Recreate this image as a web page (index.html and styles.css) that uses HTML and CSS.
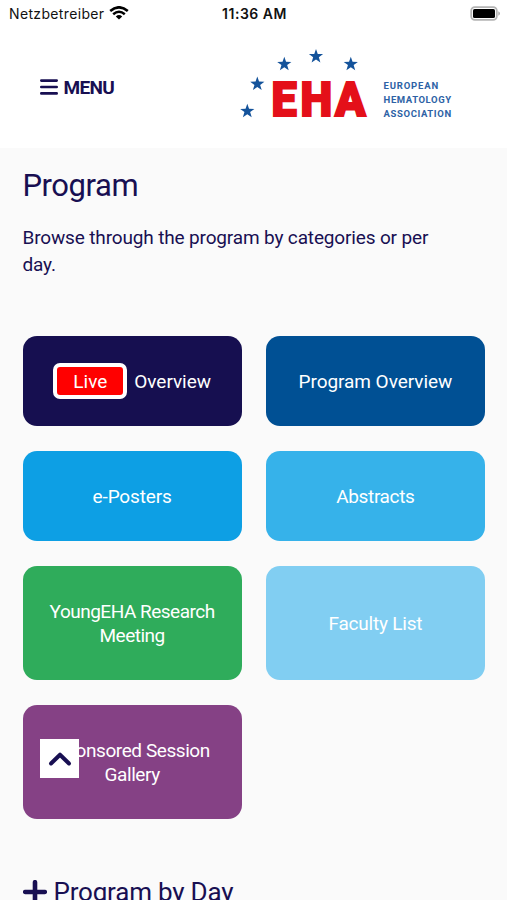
FILE: index.html
```html
<!DOCTYPE html>
<html lang="en">
<head>
<meta charset="utf-8">
<meta name="viewport" content="width=device-width, initial-scale=1">
<title>EHA Program</title>
<link rel="stylesheet" href="styles.css">
</head>
<body>
<div class="status-bar">
  <div class="carrier">
    <span class="carrier-name">Netzbetreiber</span>
    <svg class="wifi" width="20" height="14" viewBox="0 0 20 14">
      <path d="M1.2 5.1Q10 -2.5 18.8 5.1" fill="none" stroke="#000" stroke-width="2.6"/>
      <path d="M4.2 8.2Q10 3.2 15.8 8.2" fill="none" stroke="#000" stroke-width="2.5"/>
      <path d="M6.8 10.4Q10 7.8 13.2 10.4L10 13.6Z" fill="#000"/>
    </svg>
  </div>
  <span class="clock">11:36 AM</span>
  <svg class="battery" width="30" height="15" viewBox="0 0 30 15">
    <rect x="1.2" y="1.2" width="25.6" height="12.6" rx="3.6" fill="#fff" stroke="#b4b4b4" stroke-width="1.8"/>
    <rect x="3" y="3" width="22" height="9" rx="1.6" fill="#000"/>
    <path d="M28.3 5.3Q30 6 30 7.5T28.3 9.7Z" fill="#aaa"/>
  </svg>
</div>
<header class="header">
  <a class="menu">
    <svg width="18" height="16" viewBox="0 0 18 16">
      <path d="M1.3 1.6H16.7M1.3 8H16.7M1.3 14.4H16.7" stroke="#180f52" stroke-width="2.6" stroke-linecap="round"/>
    </svg>
    <span>MENU</span>
  </a>
  <svg class="logo" width="216" height="80" viewBox="239 47 216 80">
    <defs>
      <path id="star" d="M0 -7.4L1.75 -2.4L7.1 -2.3L2.85 .9L4.4 6L0 3L-4.4 6L-2.85 .9L-7.1 -2.3L-1.75 -2.4Z"/>
    </defs>
    <g fill="#14539b">
      <use href="#star" x="316" y="56.4"/>
      <use href="#star" x="284.3" y="64.2"/>
      <use href="#star" x="350.8" y="64.2"/>
      <use href="#star" x="257.3" y="84"/>
      <use href="#star" x="247.3" y="111.2"/>
    </g>
    <text class="logo-mark" transform="translate(0 116.1) scale(.93 1)" x="292 323.2 360.3">EHA</text>
    <g class="logo-name">
      <text x="383.6" y="88.5" textLength="54.5">EUROPEAN</text>
      <text x="383.6" y="102.8" textLength="67.5">HEMATOLOGY</text>
      <text x="383.6" y="117.1" textLength="67.5">ASSOCIATION</text>
    </g>
  </svg>
</header>
<main class="content">
  <h1 class="title">Program</h1>
  <p class="intro">Browse through the program by categories or per day.</p>
  <nav class="tiles">
    <a class="tile live-tile"><span class="live">Live</span><span class="live-label">Overview</span></a>
    <a class="tile overview">Program Overview</a>
    <a class="tile posters">e-Posters</a>
    <a class="tile abstracts">Abstracts</a>
    <a class="tile young">YoungEHA Research Meeting</a>
    <a class="tile faculty">Faculty List</a>
    <a class="tile sponsored">Sponsored Session Gallery</a>
  </nav>
  <h2 class="by-day">
    <svg width="24" height="24" viewBox="0 0 24 24"><path d="M12 2.2V21.8M2.2 12H21.8" stroke="#180f52" stroke-width="4.6" stroke-linecap="round"/></svg>
    <span>Program by Day</span>
  </h2>
</main>
<a class="to-top" aria-label="Back to top">
  <svg width="24" height="16" viewBox="0 0 24 16"><path d="M3 12.5L12 3.7L21 12.5" fill="none" stroke="#180f52" stroke-width="4" stroke-linecap="round" stroke-linejoin="round"/></svg>
</a>
</body>
</html>
```
FILE: styles.css
```css
* { box-sizing: border-box; }
html, body { height: 900px; overflow: hidden; }
body {
  margin: 0;
  background: #fafafa;
  color: #180f52;
  font-family: Roboto, sans-serif;
}
.status-bar {
  display: grid;
  grid-template-columns: 1fr auto 1fr;
  align-items: center;
  height: 27px;
  padding: 0 7px 0 9px;
  background: #fff;
  color: #111;
  font: 14px/27px Inter, sans-serif;
}
.carrier { display: flex; align-items: center; gap: 5px; }
.carrier-name { letter-spacing: 0.35px; }
.wifi { margin-top: -2px; }
.clock { font-weight: 600; letter-spacing: 0.5px; }
.battery { justify-self: end; margin-top: -1px; }
.header {
  display: flex;
  justify-content: space-between;
  height: 121px;
  padding: 20px 52px 0 39.5px;
  background: #fff;
}
.menu {
  display: flex;
  align-items: center;
  gap: 6px;
  height: 80px;
  font-size: 19px;
  font-weight: 700;
}
.menu span { letter-spacing: -0.7px; }
.logo-mark {
  font: 900 48.5px Roboto, sans-serif;
  fill: #e41019;
  stroke: #e41019;
  stroke-width: 2px;
}
.logo-name { font: 700 9.5px Roboto, sans-serif; fill: #2d62a5; }
.content { padding: 18px 22px 0 22.5px; }
.title {
  margin: 0;
  font-size: 31px;
  font-weight: 400;
  line-height: 40px;
  letter-spacing: -0.45px;
}
.intro {
  width: 430px;
  margin: 18px 0 57.5px;
  font-size: 19px;
  line-height: 27px;
  letter-spacing: -0.15px;
}
.tiles {
  display: grid;
  grid-template-columns: 1fr 1fr;
  grid-template-rows: 90.5px 90.5px 114.5px 114.5px;
  gap: 24.5px 24px;
}
.tile {
  display: flex;
  align-items: center;
  justify-content: center;
  padding: 2px 20px 0;
  border-radius: 14px;
  color: #fff;
  font-size: 19px;
  line-height: 24.5px;
  text-align: center;
}
.live-tile { gap: 7px; background: #160f50; }
.live {
  width: 74px;
  height: 36px;
  margin-top: -2px;
  border: 4px solid #fff;
  border-radius: 7px;
  background: #f00;
  line-height: 29px;
}
.live-label { letter-spacing: -0.05px; }
.overview { background: #005094; letter-spacing: -0.05px; }
.posters { background: #0d9fe4; letter-spacing: -0.15px; }
.abstracts { background: #36b2ea; letter-spacing: -0.35px; }
.young { padding-top: 3px; background: #2fac5b; letter-spacing: -0.5px; }
.faculty { background: #81cef2; letter-spacing: -0.2px; }
.sponsored { padding-top: 3px; background: #854185; letter-spacing: -0.42px; }
.by-day {
  display: flex;
  align-items: center;
  gap: 7px;
  margin: 54.5px 0 0;
  font-size: 26px;
  font-weight: 400;
  line-height: 36px;
  letter-spacing: -0.2px;
}
.to-top {
  position: fixed;
  left: 40px;
  top: 739px;
  display: flex;
  align-items: center;
  justify-content: center;
  width: 39px;
  height: 39px;
  background: #fff;
}
```
